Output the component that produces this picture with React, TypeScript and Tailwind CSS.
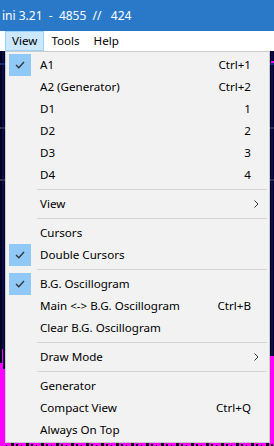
import React from "react";

type Item =
  | { type: "sep" }
  | { type: "item"; label: string; shortcut?: string; checked?: boolean; submenu?: boolean };

const items: Item[] = [
  { type: "item", label: "A1", shortcut: "Ctrl+1", checked: true },
  { type: "item", label: "A2 (Generator)", shortcut: "Ctrl+2" },
  { type: "item", label: "D1", shortcut: "1" },
  { type: "item", label: "D2", shortcut: "2" },
  { type: "item", label: "D3", shortcut: "3" },
  { type: "item", label: "D4", shortcut: "4" },
  { type: "sep" },
  { type: "item", label: "View", submenu: true },
  { type: "sep" },
  { type: "item", label: "Cursors" },
  { type: "item", label: "Double Cursors", checked: true },
  { type: "sep" },
  { type: "item", label: "B.G. Oscillogram", checked: true },
  { type: "item", label: "Main <-> B.G. Oscillogram", shortcut: "Ctrl+B" },
  { type: "item", label: "Clear B.G. Oscillogram" },
  { type: "sep" },
  { type: "item", label: "Draw Mode", submenu: true },
  { type: "sep" },
  { type: "item", label: "Generator" },
  { type: "item", label: "Compact View", shortcut: "Ctrl+Q" },
  { type: "item", label: "Always On Top" },
];

function Check() {
  return (
    <svg width="10" height="8" viewBox="0 0 10 8">
      <polyline points="1,4 3.8,6.8 9,1" fill="none" stroke="#333" strokeWidth="1.3" />
    </svg>
  );
}

function Chevron() {
  return (
    <svg width="5" height="8" viewBox="0 0 5 8">
      <polyline points="0.5,0.5 4,4 0.5,7.5" fill="none" stroke="#333" strokeWidth="1" />
    </svg>
  );
}

// background oscillogram, only edges are visible behind the popup
function Scope() {
  const ticks = [];
  for (let x = 6; x < 274; x += 5) {
    const h = 1 + ((x * 7) % 3);
    ticks.push(<rect key={x} x={x} y={395 - h} width={(x % 3) + 1} height={h} fill="#000" />);
  }
  return (
    <svg width="274" height="395" viewBox="0 0 274 395" className="block">
      <rect width="274" height="395" fill="#000022" />
      <line x1="0" y1="13" x2="274" y2="13" stroke="#1e63c8" strokeWidth="1" />
      <line x1="0" y1="77" x2="274" y2="77" stroke="#666" strokeWidth="1" />
      <line x1="0" y1="129" x2="274" y2="129" stroke="#777" strokeWidth="1" />
      <line x1="3" y1="0" x2="3" y2="395" stroke="#1a1a7a" strokeWidth="1" />
      <line x1="272" y1="0" x2="272" y2="395" stroke="#1a1a7a" strokeWidth="1" />
      <rect x="271" y="10" width="3" height="2" fill="#ff00ff" />
      <rect x="0" y="312" width="2" height="83" fill="#ff00ff" />
      <rect x="2" y="298" width="1" height="97" fill="#ff00ff" />
      <rect x="3" y="318" width="2" height="77" fill="#ff00ff" />
      <rect x="270" y="305" width="4" height="90" fill="#ff00ff" />
      <rect x="0" y="390" width="274" height="5" fill="#ff00ff" />
      {ticks}
    </svg>
  );
}

export default function App() {
  return (
    <div
      className="relative w-[274px] h-[446px] overflow-hidden bg-[#000022] text-[11.6px] text-black"
      style={{ fontFamily: '"Segoe UI", "Noto Sans", sans-serif' }}
    >
      <div className="h-[31px] bg-[#2a79c9] text-white text-[12px] flex items-center pl-[2px] whitespace-pre">
        ini 3.21  -  4855  //   424
      </div>
      <div className="h-[20px] bg-white flex items-stretch pl-[5px]">
        <div className="px-[6px] bg-[#cce8ff] border border-[#99d1ff] flex items-center">View</div>
        <div className="px-[7px] flex items-center">Tools</div>
        <div className="px-[7px] flex items-center">Help</div>
      </div>
      <Scope />

      <div className="absolute left-[5px] top-[51px] w-[265px] bg-[#f2f2f2] border border-[#cccccc] pt-[2px] pb-[1px] px-[2px]">
        {items.map((it, i) =>
          it.type === "sep" ? (
            <div key={i} className="h-[7px] flex items-center pl-[29px]">
              <div className="h-px w-full bg-[#d4d4d4]" />
            </div>
          ) : (
            <div key={i} className="h-[22px] flex items-center">
              <div className="w-[22px] h-[22px] ml-[1px] flex items-center justify-center">
                {it.checked && (
                  <div className="w-[22px] h-[22px] bg-[#90c8f6] flex items-center justify-center">
                    <Check />
                  </div>
                )}
              </div>
              <div className="ml-[9px] flex-1 whitespace-pre">{it.label}</div>
              {it.shortcut && <div className="mr-[16px]">{it.shortcut}</div>}
              {it.submenu && (
                <div className="mr-[8px] flex items-center">
                  <Chevron />
                </div>
              )}
            </div>
          )
        )}
      </div>
    </div>
  );
}
